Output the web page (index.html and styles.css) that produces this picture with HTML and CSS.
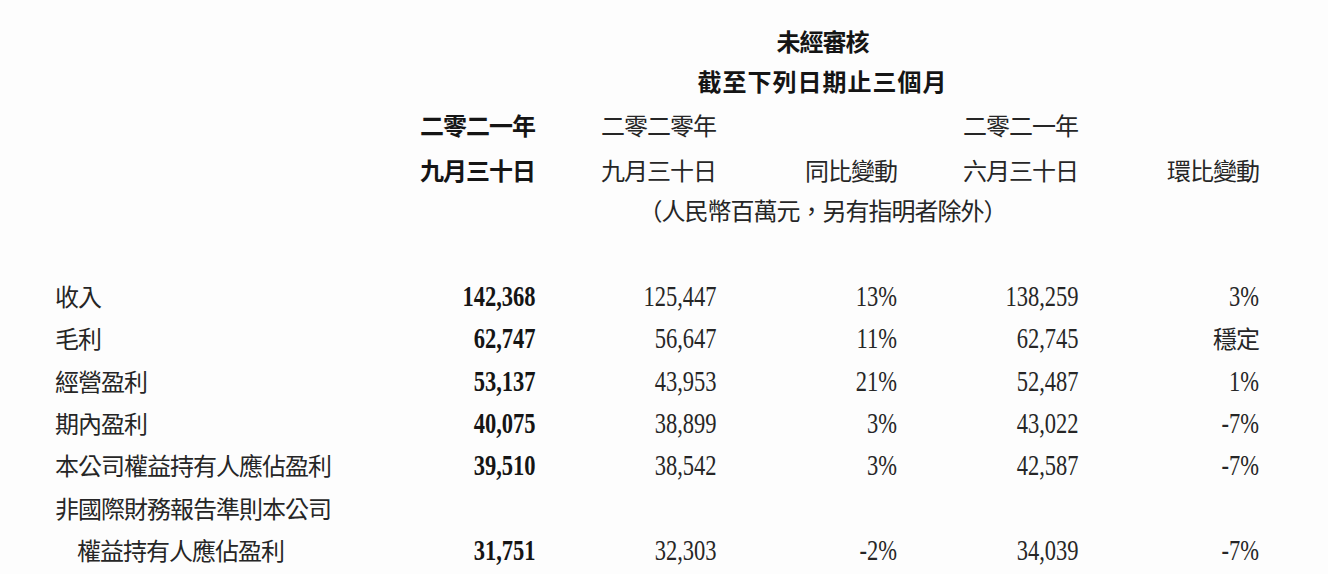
FILE: index.html
```html
<!DOCTYPE html>
<html lang="zh-Hant">
<head>
<meta charset="utf-8">
<title>未經審核</title>
<link rel="stylesheet" href="styles.css">
</head>
<body>
<div class="sheet">
  <div class="row r-title1">
    <div class="title bold">未經審核</div>
  </div>
  <div class="row r-title2">
    <div class="title bold wide">截至下列日期止三個月</div>
  </div>
  <div class="row r-year">
    <div></div>
    <div class="c bold">二零二一年</div>
    <div class="c">二零二零年</div>
    <div class="c"></div>
    <div class="c">二零二一年</div>
    <div class="c"></div>
  </div>
  <div class="row r-date">
    <div></div>
    <div class="c bold">九月三十日</div>
    <div class="c">九月三十日</div>
    <div class="c">同比變動</div>
    <div class="c">六月三十日</div>
    <div class="c">環比變動</div>
  </div>
  <div class="row r-unit">
    <div class="title">（人民幣百萬元，另有指明者除外）</div>
  </div>
  <div class="spacer"></div>

  <div class="row data">
    <div class="label">收入</div>
    <div class="c"><span class="num bold">142,368</span></div>
    <div class="c"><span class="num">125,447</span></div>
    <div class="c"><span class="num">13%</span></div>
    <div class="c"><span class="num">138,259</span></div>
    <div class="c"><span class="num">3%</span></div>
  </div>
  <div class="row data">
    <div class="label">毛利</div>
    <div class="c"><span class="num bold">62,747</span></div>
    <div class="c"><span class="num">56,647</span></div>
    <div class="c"><span class="num">11%</span></div>
    <div class="c"><span class="num">62,745</span></div>
    <div class="c">穩定</div>
  </div>
  <div class="row data">
    <div class="label">經營盈利</div>
    <div class="c"><span class="num bold">53,137</span></div>
    <div class="c"><span class="num">43,953</span></div>
    <div class="c"><span class="num">21%</span></div>
    <div class="c"><span class="num">52,487</span></div>
    <div class="c"><span class="num">1%</span></div>
  </div>
  <div class="row data">
    <div class="label">期內盈利</div>
    <div class="c"><span class="num bold">40,075</span></div>
    <div class="c"><span class="num">38,899</span></div>
    <div class="c"><span class="num">3%</span></div>
    <div class="c"><span class="num">43,022</span></div>
    <div class="c"><span class="num">-7%</span></div>
  </div>
  <div class="row data">
    <div class="label">本公司權益持有人應佔盈利</div>
    <div class="c"><span class="num bold">39,510</span></div>
    <div class="c"><span class="num">38,542</span></div>
    <div class="c"><span class="num">3%</span></div>
    <div class="c"><span class="num">42,587</span></div>
    <div class="c"><span class="num">-7%</span></div>
  </div>
  <div class="row data">
    <div class="label">非國際財務報告準則本公司</div>
    <div class="c"></div>
    <div class="c"></div>
    <div class="c"></div>
    <div class="c"></div>
    <div class="c"></div>
  </div>
  <div class="row data">
    <div class="label indent">權益持有人應佔盈利</div>
    <div class="c"><span class="num bold">31,751</span></div>
    <div class="c"><span class="num">32,303</span></div>
    <div class="c"><span class="num">-2%</span></div>
    <div class="c"><span class="num">34,039</span></div>
    <div class="c"><span class="num">-7%</span></div>
  </div>
</div>
</body>
</html>
```

FILE: styles.css
```css
html, body {
  margin: 0;
  padding: 0;
  background: #fdfdfd;
}

body {
  width: 1328px;
  height: 574px;
  overflow: hidden;
  color: #262626;
  font-family: "Noto Sans CJK TC", "Noto Sans CJK SC", sans-serif;
  font-size: 24px;
  letter-spacing: -1px;
}

.sheet {
  padding: 21px 0 0 55px;
}

.row {
  display: grid;
  grid-template-columns: 299px repeat(5, 181px);
  align-items: center;
  line-height: 1;
  white-space: nowrap;
}

.r-title1 { height: 40px; }
.r-title2 { height: 40px; }
.r-year   { height: 48px; }
.r-date   { height: 42px; }
.r-unit   { height: 38px; }
.spacer   { height: 46px; }
.data     { height: 42.3px; }

.title {
  grid-column: 2 / -1;
  text-align: center;
  padding-left: 32px;
}

.wide {
  letter-spacing: 1px;
}

.bold {
  font-weight: 700;
  color: #151515;
}

.c {
  text-align: right;
}

.label {
  text-align: left;
}

.indent {
  padding-left: 22px;
}

.num {
  display: inline-block;
  font-family: "Liberation Serif", "Times New Roman", serif;
  font-size: 30px;
  letter-spacing: 0;
  transform: scaleX(0.75);
  transform-origin: 100% 50%;
}
```
